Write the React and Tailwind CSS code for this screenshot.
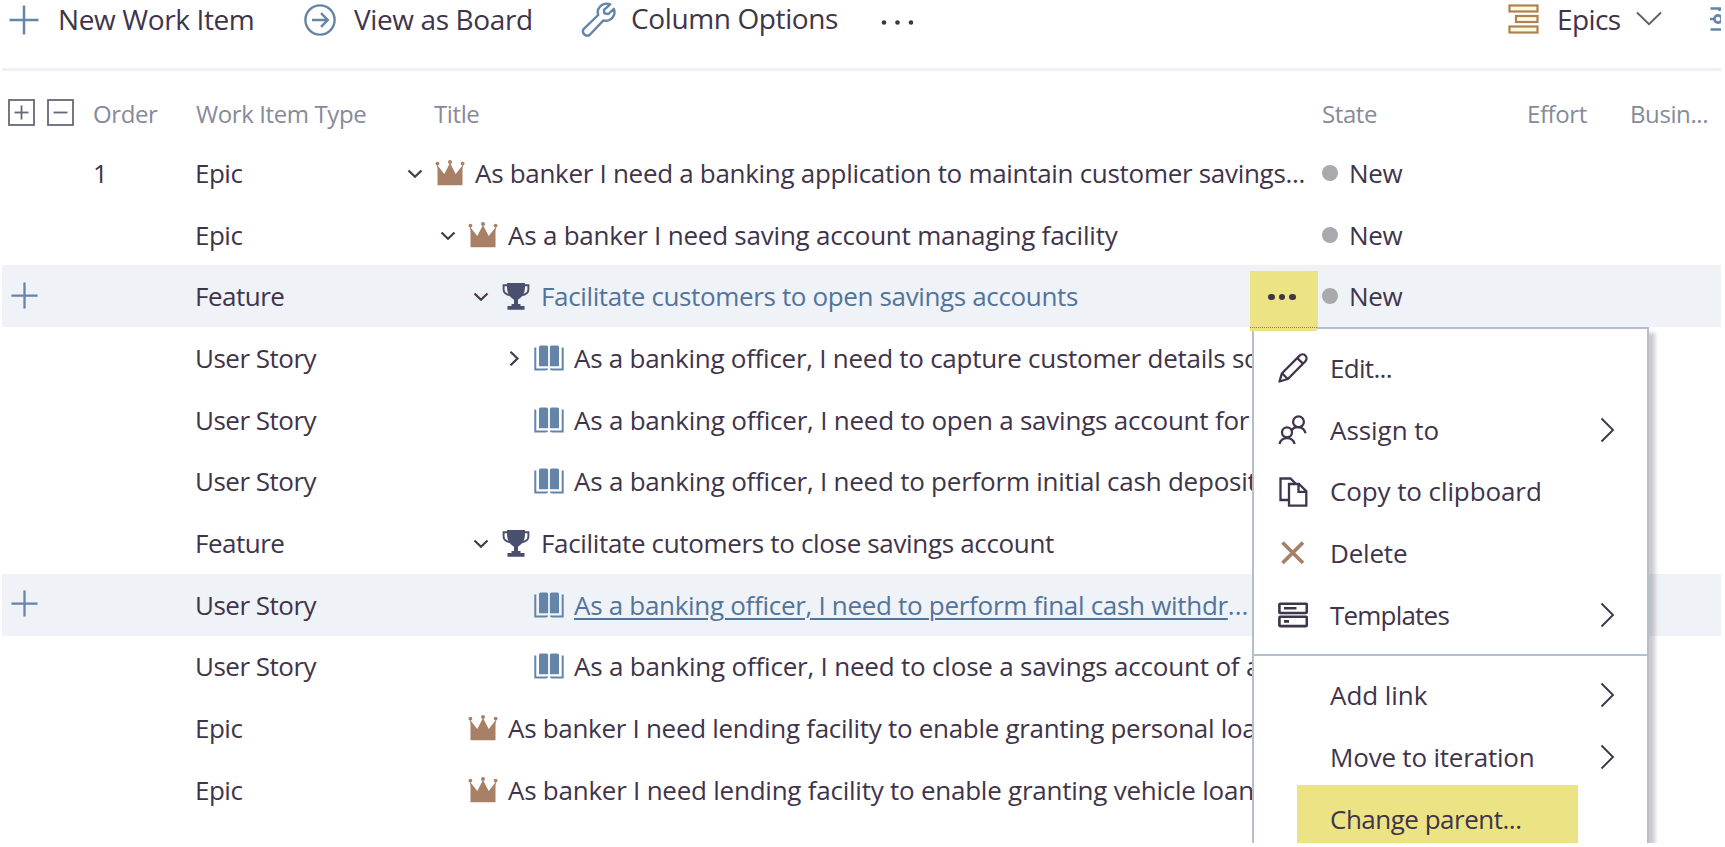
import React from "react";

const ROWS = [
  { order: "1", type: "Epic", depth: 0, chevron: "down", icon: "crown", tracking: "tracking-[-0.3px]", title: "As banker I need a banking application to maintain customer savings...", state: "New" },
  { type: "Epic", depth: 1, chevron: "down", icon: "crown", tracking: "tracking-[-0.22px]", title: "As a banker I need saving account managing facility", state: "New" },
  { type: "Feature", depth: 2, chevron: "down", icon: "trophy", tracking: "tracking-[-0.36px]", title: "Facilitate customers to open savings accounts", state: "New", active: true, link: true },
  { type: "User Story", depth: 3, chevron: "right", icon: "book", tracking: "tracking-[-0.26px]", title: "As a banking officer, I need to capture customer details so" },
  { type: "User Story", depth: 3, icon: "book", tracking: "tracking-[-0.22px]", title: "As a banking officer, I need to open a savings account for" },
  { type: "User Story", depth: 3, icon: "book", tracking: "tracking-[-0.23px]", title: "As a banking officer, I need to perform initial cash deposit" },
  { type: "Feature", depth: 2, chevron: "down", icon: "trophy", tracking: "tracking-[-0.34px]", title: "Facilitate cutomers to close savings account" },
  { type: "User Story", depth: 3, icon: "book", tracking: "tracking-[-0.3px]", title: "As a banking officer, I need to perform final cash withdr", active: true, underline: true },
  { type: "User Story", depth: 3, icon: "book", tracking: "tracking-[-0.2px]", title: "As a banking officer, I need to close a savings account of a" },
  { type: "Epic", depth: 1, icon: "crown", tracking: "tracking-[-0.3px]", title: "As banker I need lending facility to enable granting personal loan" },
  { type: "Epic", depth: 1, icon: "crown", tracking: "tracking-[-0.24px]", title: "As banker I need lending facility to enable granting vehicle loan" },
];

const INDENT = ["pl-0", "pl-[33px]", "pl-[66px]", "pl-[99px]"];

function Plus({ className }) {
  return (
    <svg className={className} viewBox="0 0 30 30" fill="none" stroke="#6485a8" strokeWidth="2.5">
      <path d="M15 0.5V29.5M0.5 15H29.5" />
    </svg>
  );
}

function BoardArrow() {
  return (
    <svg className="h-8 w-8 shrink-0" viewBox="0 0 32 32" fill="none" stroke="#6485a8" strokeWidth="2.4">
      <circle cx="16" cy="16" r="14.6" />
      <path d="M8 16H23.5M17 9.2L23.8 16L17 22.8" />
    </svg>
  );
}

function Wrench() {
  return (
    <svg className="h-[35px] w-[35px] shrink-0" viewBox="0 0 35 35" fill="none" stroke="#6485a8" strokeWidth="2.4" strokeLinejoin="round">
      <path d="M29.2 2.3C24.500 0.500 19 2.600 17.200 7.200C16.600 9 16.600 11 17.200 13L2.800 26.800A4.300 4.300 0 0 0 8.800 32.800L22.400 18.400C24.500 19 26.500 18.900 28.400 18C32.800 16 34.600 11 32.800 6.800L27.400 12L23.400 11.400L23 7.800Z" />
    </svg>
  );
}

function BacklogLevel() {
  return (
    <svg className="h-[30px] w-[31px]" viewBox="0 0 31 30" fill="#fffbe0" stroke="#ae8250" strokeWidth="2.2">
      <rect x="1.5" y="1.5" width="28" height="6" />
      <rect x="8" y="12" width="21.5" height="6" />
      <rect x="1.5" y="22.5" width="28" height="6" />
    </svg>
  );
}

function Sliders() {
  return (
    <svg className="h-[26px] w-[11px]" viewBox="0 0 11 26" fill="none" stroke="#6485a8" strokeWidth="2.6">
      <path d="M0.500 2.500H11M0 13H5M0.500 23.500H11" />
      <circle cx="8" cy="13" r="3.600" />
      <path d="M9.500 2.500V5" />
    </svg>
  );
}

function Toggle({ minus }) {
  return (
    <svg className="h-[27px] w-[27px]" viewBox="0 0 27 27" fill="none" stroke="#66687a" strokeWidth="1.8">
      <rect x="1" y="1" width="25" height="25" />
      <path d="M6.5 13.5H20.5" />
      {!minus && <path d="M13.5 6.5V20.5" />}
    </svg>
  );
}

function Chevron({ dir }) {
  return (
    <svg className="h-4 w-4" viewBox="0 0 16 16" fill="none" stroke="#463a4b" strokeWidth="2.2">
      {dir === "down" && <path d="M1.5 5.500L8 11.700L14.5 5.500" />}
      {dir === "right" && <path d="M4.5 1.700L11.500 8.500L4.5 15.300" />}
    </svg>
  );
}

function Crown() {
  return (
    <svg className="h-7 w-[30px]" viewBox="0 0 30 28" fill="#a88066">
      <path d="M2.500 26.300V10L1.6 5.2L9.3 15L15 4L20.700 15L28.400 5.2L27.500 10V26.300Z" />
      <circle cx="2.4" cy="4.6" r="1.900" />
      <circle cx="15" cy="3" r="2" />
      <circle cx="27.6" cy="4.6" r="1.900" />
    </svg>
  );
}

function Trophy() {
  return (
    <svg className="h-7 w-[30px]" viewBox="0 0 30 28" fill="#4a4f6e">
      <path d="M6 1H24V5C24 12 20.500 15.500 17 17.700V22H19.500V24H23.500V27.700H6.500V24H10.500V22H13V17.700C9.500 15.500 6 12 6 5Z" />
      <path d="M7 3.200H2.600V7.500C2.600 10.500 5 12.500 9 13.200M23 3.200H27.400V7.500C27.400 10.500 25 12.500 21 13.200" fill="none" stroke="#4a4f6e" strokeWidth="1.900" />
    </svg>
  );
}

function Book() {
  return (
    <svg className="h-7 w-[30px]" viewBox="0 0 30 28" fill="#6485a8">
      <path d="M5 3Q5 1.400 6.600 1.400H12.500Q14.100 1.400 14.100 3V22.200H5ZM15.900 3Q15.900 1.400 17.500 1.400H23.400Q25 1.400 25 3V22.200H15.900Z" />
      <path d="M1.300 3.500V25.400H12Q13 25.400 13.300 24.500M28.700 3.500V25.400H18Q17 25.400 16.700 24.500" fill="none" stroke="#6485a8" strokeWidth="2" />
    </svg>
  );
}

function ItemIcon({ name }) {
  if (name === "crown") return <Crown />;
  if (name === "trophy") return <Trophy />;
  return <Book />;
}

function MenuIcon({ name }) {
  const common = { className: "h-[30px] w-[30px]", viewBox: "0 0 30 30", fill: "none", stroke: "#40344a", strokeWidth: 2.3 };
  if (name === "edit")
    return (
      <svg {...common} strokeLinejoin="round">
        <path d="M1.500 28.500L4 20.200L21.600 2.600A3.900 3.900 0 0 1 27.400 8.200L9.800 26Z" />
        <path d="M4 20.200L9.800 26M19.200 5L25 10.600" />
      </svg>
    );
  if (name === "assign")
    return (
      <svg {...common}>
        <circle cx="20.500" cy="6.800" r="5.400" />
        <circle cx="9" cy="17.300" r="5" />
        <path d="M1.500 29A7.800 7.800 0 0 1 16.600 29M13.800 15C15.500 12.500 18 11.900 20.500 12.100C24.500 12.500 26.600 14.500 27.600 18.200" />
      </svg>
    );
  if (name === "copy")
    return (
      <svg {...common}>
        <path d="M11 23H2.500V1.500H12.500L18 7" />
        <path d="M11 7H21L28.300 14.300V28.700H11ZM20.500 7.500V14.800H28" />
      </svg>
    );
  if (name === "delete")
    return (
      <svg {...common} stroke="#a88066" strokeWidth="3.800">
        <path d="M4.500 4.500L25 25M25 4.500L4.500 25" />
      </svg>
    );
  if (name === "templates")
    return (
      <svg {...common} strokeWidth="2.600">
        <rect x="1.400" y="3.700" width="27.400" height="9.300" rx="1" />
        <rect x="1.400" y="16.800" width="27.400" height="9.300" rx="1" />
        <path d="M6 8.300H18.500M6 21.400H11" />
      </svg>
    );
  return null;
}

function ToolbarItem({ icon, label, gap }) {
  return (
    <div className={`flex items-center ${gap}`}>
      {icon}
      <span className="pb-0.5 tracking-[-0.38px]">{label}</span>
    </div>
  );
}

function Toolbar() {
  return (
    <header className="flex h-[71px] shrink-0 items-start border-b-[3px] border-[#edf0f5] text-[28px] leading-9 whitespace-nowrap">
      <div className="flex h-[39px] w-[295px] items-center pl-[7px]">
        <ToolbarItem icon={<Plus className="h-[30px] w-[30px] shrink-0" />} label="New Work Item" gap="gap-[19px]" />
      </div>
      <div className="flex h-[39px] w-[284px] items-center pl-[7px]">
        <ToolbarItem icon={<BoardArrow />} label="View as Board" gap="gap-[18px]" />
      </div>
      <div className="flex h-[38px] w-[298px] items-center">
        <ToolbarItem icon={<Wrench />} label="Column Options" gap="gap-[15px]" />
      </div>
      <svg className="mt-[20px] h-[5px] w-[34px]" viewBox="0 0 34 5" fill="#40344a">
        <circle cx="5" cy="2.500" r="2.300" />
        <circle cx="18.500" cy="2.500" r="2.300" />
        <circle cx="32" cy="2.500" r="2.300" />
      </svg>
      <div className="ml-auto flex h-[37px] items-center">
        <BacklogLevel />
        <span className="ml-[18px] w-[63px] tracking-[-0.6px]">Epics</span>
        <svg className="ml-[16px] h-[15px] w-[26px]" viewBox="0 0 26 15" fill="none" stroke="#5c5f70" strokeWidth="1.900">
          <path d="M1 1.500L13 13.200L25 1.500" />
        </svg>
        <div className="ml-[48px]"><Sliders /></div>
      </div>
    </header>
  );
}

function HeaderRow() {
  return (
    <div className="flex h-[71px] shrink-0 items-center pt-[14px] text-[24px] tracking-[-0.4px] whitespace-nowrap text-[#868a99]">
      <div className="flex w-[91px] gap-[12px] pb-0.5 pl-[6px]">
        <Toggle />
        <Toggle minus />
      </div>
      <span className="w-[103px]">Order</span>
      <span className="w-[236px]">Work Item Type</span>
      <span className="w-[890px] pl-[2px]">Title</span>
      <span className="w-[205px]">State</span>
      <span className="w-[103px]">Effort</span>
      <span>Busin...</span>
    </div>
  );
}

function Row({ row }) {
  return (
    <div className={`flex h-[61.7px] shrink-0 items-center whitespace-nowrap ${row.active ? "bg-[#eff2f7]" : ""}`}>
      <div className="w-[91px] pl-[9px]">{row.active && <Plus className="-mt-0.5 h-[27px] w-[27px]" />}</div>
      <div className="w-[102px]">{row.order}</div>
      <div className="w-[212px] tracking-[-0.5px]">{row.type}</div>
      <div className={`flex w-[900px] items-center ${INDENT[row.depth]}`}>
        <div className="w-[28px] shrink-0"><Chevron dir={row.chevron} /></div>
        <div className="w-[40px] shrink-0"><ItemIcon name={row.icon} /></div>
        <span className={`${row.tracking} ${row.link || row.underline ? "text-[#52749b]" : ""} ${row.underline ? "underline decoration-2 underline-offset-[3px]" : ""}`}>{row.title}</span>
        {row.underline && <span className="text-[#52749b]">...</span>}
      </div>
      {row.state && (
        <div className="flex items-center gap-[11px] pl-[15px]">
          <span className="h-4 w-4 rounded-full bg-[#aaa9ad]" />
          <span className="tracking-[-0.4px]">{row.state}</span>
        </div>
      )}
    </div>
  );
}

function MenuItem({ icon, label, submenu, tracking = "tracking-[-0.2px]" }) {
  return (
    <div className="flex h-[61.7px] shrink-0 items-center pr-[32px] pl-[24px]">
      <div className="w-[52px] pt-px"><MenuIcon name={icon} /></div>
      <span className={`flex-1 ${tracking}`}>{label}</span>
      {submenu && (
        <svg className="h-[26px] w-[15px]" viewBox="0 0 15 26" fill="none" stroke="#40344a" strokeWidth="1.900">
          <path d="M1.500 1.500L13 13L1.500 24.500" />
        </svg>
      )}
    </div>
  );
}

function ContextMenu() {
  return (
    <div className="absolute top-[327px] left-[1250px] flex h-[540px] w-[397px] flex-col border-2 border-[#b3bfcc] bg-white pt-[8px] whitespace-nowrap shadow-[6px_6px_4px_rgba(80,80,90,0.3)]">
      <MenuItem icon="edit" label="Edit..." tracking="tracking-[-0.7px]" />
      <MenuItem icon="assign" label="Assign to" submenu tracking="tracking-[-0.05px]" />
      <MenuItem icon="copy" label="Copy to clipboard" tracking="tracking-[-0.1px]" />
      <MenuItem icon="delete" label="Delete" />
      <MenuItem icon="templates" label="Templates" submenu tracking="tracking-[-0.8px]" />
      <div className="mt-[9px] mb-[8px] h-[2px] shrink-0 bg-[#b3bfcc]" />
      <MenuItem label="Add link" submenu tracking="tracking-[-0.05px]" />
      <MenuItem label="Move to iteration" submenu />
      <div className="-mt-[3px] ml-[43px] flex h-[61px] w-[281px] shrink-0 items-center bg-[#ece484] pt-[7px] pl-[33px] tracking-[-0.5px]">Change parent...</div>
    </div>
  );
}

export default function App() {
  return (
    <div className="h-[847px] w-[1725px] overflow-hidden bg-white pl-[2px] font-['Open_Sans',sans-serif] text-[26px] leading-9 text-[#40344a]">
      <div className="relative flex h-[843px] w-[1719px] flex-col overflow-hidden">
        <Toolbar />
        <HeaderRow />
        {ROWS.map((row, i) => (
          <Row key={i} row={row} />
        ))}
        <div className="absolute top-[271px] left-[1248px] flex h-[60px] w-[68px] items-center justify-center gap-[4px] bg-[#ece484] pr-[4px] pb-[8px]">
          <span className="h-[6.500px] w-[6.500px] rounded-full bg-[#40344a]" />
          <span className="h-[6.500px] w-[6.500px] rounded-full bg-[#40344a]" />
          <span className="h-[6.500px] w-[6.500px] rounded-full bg-[#40344a]" />
        </div>
        <ContextMenu />
        <div className="absolute top-[327px] left-[1248px] h-1 w-[67px] border-t border-dotted border-[#9a7a55] bg-[#ece484]" />
      </div>
    </div>
  );
}
